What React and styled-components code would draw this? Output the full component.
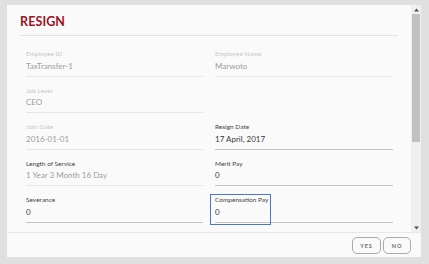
import React from "react";
import styled, { createGlobalStyle, css } from "styled-components";

const Global = createGlobalStyle`
  html, body { margin: 0; padding: 0; }
  body {
    background: #e1e0e0;
    font-family: Lato, "Open Sans", sans-serif;
    width: 429px;
    height: 264px;
    overflow: hidden;
  }
`;

const Page = styled.div`
  padding: 5px 8px 7px 7px;
`;

const Dialog = styled.div`
  width: 414px;
  height: 252px;
  background: #fafafa;
  display: flex;
  flex-direction: column;
`;

const Body = styled.div`
  height: 227px;
  display: flex;
  flex-direction: row;
`;

const Content = styled.div`
  flex: 1;
  overflow: hidden;
`;

const Header = styled.h2`
  margin: 0 13px;
  padding: 10px 0 6px;
  line-height: 14px;
  font-size: 12.5px;
  font-weight: 700;
  color: #a0131f;
  letter-spacing: 0.1px;
  border-bottom: 1px solid #e4e4e4;
`;

const Form = styled.div`
  display: grid;
  grid-template-columns: 177px 178px;
  column-gap: 12px;
  row-gap: 9.1px;
  padding: 13px 18px 0 19px;
`;

const Field = styled.div`
  position: relative;
  padding-bottom: 4px;
  border-bottom: 1px solid ${(p) => (p.$disabled ? "#e6e6e6" : "#c4c4c4")};
  ${(p) =>
    p.$focused &&
    css`
      &::after {
        content: "";
        position: absolute;
        left: -5px;
        top: -1.5px;
        width: 59px;
        height: 29px;
        border: 1.5px solid #4a76cc;
      }
    `}
`;

const Label = styled.div`
  font-size: 6.5px;
  line-height: 9px;
  margin-bottom: 1.5px;
  color: ${(p) => (p.$disabled ? "#c9c9c9" : "#454545")};
  white-space: nowrap;
`;

const Value = styled.div`
  font-size: 8px;
  line-height: 12px;
  color: ${(p) => (p.$disabled ? "#9d9d9d" : "#3a3a3a")};
  white-space: nowrap;
`;

const Scrollbar = styled.div`
  width: 10px;
  background: #f0f0f0;
  display: flex;
  flex-direction: column;
  align-items: center;
`;

const Arrow = styled.div`
  height: 9px;
  width: 10px;
  display: flex;
  align-items: center;
  justify-content: center;
`;

const Track = styled.div`
  flex: 1;
  width: 100%;
  display: flex;
  justify-content: center;
`;

const Thumb = styled.div`
  width: 8px;
  height: 128px;
  background: #c1c1c1;
`;

const Footer = styled.div`
  flex: 1;
  border-top: 1px solid #e8e8e8;
  display: flex;
  align-items: center;
  justify-content: flex-end;
  gap: 2px;
  padding: 1px 10px 0 0;
`;

const Button = styled.button`
  width: ${(p) => p.$w}px;
  height: 17px;
  padding: 0;
  background: #fafafa;
  border: 1px solid #ababab;
  border-radius: 5px;
  font-family: Lato, sans-serif;
  font-weight: 700;
  font-size: 5.5px;
  letter-spacing: 1px;
  color: #6d6d6d;
`;

const Tri = ({ down }) => (
  <svg width="5" height="4" viewBox="0 0 5 4">
    <polygon points={down ? "0,0.5 5,0.5 2.5,3.5" : "0,3.5 5,3.5 2.5,0.5"} fill="#505050" />
  </svg>
);

const fields = [
  { label: "Employee ID", value: "TaxTransfer-1", disabled: true },
  { label: "Employee Name", value: "Marwoto", disabled: true },
  { label: "Job Level", value: "CEO", disabled: true },
  null,
  { label: "Join Date", value: "2016-01-01", disabled: true },
  { label: "Resign Date", value: "17 April, 2017" },
  { label: "Length of Service", value: "1 Year 3 Month 16 Day", disabled: true, darkLabel: true },
  { label: "Merit Pay", value: "0" },
  { label: "Severance", value: "0" },
  { label: "Compensation Pay", value: "0", focused: true },
];

export default function App() {
  return (
    <Page>
      <Global />
      <Dialog>
        <Body>
          <Content>
            <Header>RESIGN</Header>
            <Form>
              {fields.map((f, i) =>
                f ? (
                  <Field key={i} $disabled={f.disabled} $focused={f.focused}>
                    <Label $disabled={f.disabled && !f.darkLabel}>{f.label}</Label>
                    <Value $disabled={f.disabled}>{f.value}</Value>
                  </Field>
                ) : (
                  <div key={i} />
                )
              )}
            </Form>
          </Content>
          <Scrollbar>
            <Arrow>
              <Tri />
            </Arrow>
            <Track>
              <Thumb />
            </Track>
            <Arrow>
              <Tri down />
            </Arrow>
          </Scrollbar>
        </Body>
        <Footer>
          <Button $w={29}>YES</Button>
          <Button $w={28}>NO</Button>
        </Footer>
      </Dialog>
    </Page>
  );
}
